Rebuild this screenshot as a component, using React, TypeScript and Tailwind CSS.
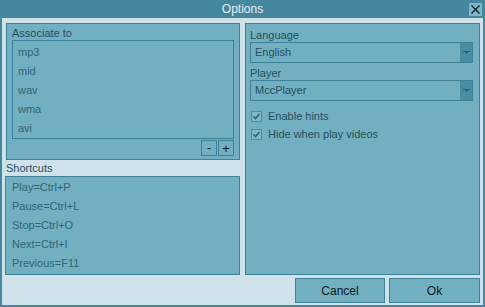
import React from "react";

const font = { fontFamily: '"Liberation Sans", Arial, sans-serif' };

function Combo({ value }: { value: string }) {
  return (
    <div className="flex h-[21px] w-[223px] border border-[#3e8299] bg-[#72afc1]">
      <div className="flex-1 pl-[4px] leading-[19px] text-[#24505e]">{value}</div>
      <div className="flex w-[12px] items-center justify-center bg-[#4a8ca1]">
        <svg width="7" height="4" viewBox="0 0 7 4">
          <rect x="0" y="0" width="7" height="1" fill="#2c5f6f" />
          <rect x="2" y="1" width="3" height="1" fill="#2c5f6f" />
          <rect x="3" y="2" width="1" height="1" fill="#2c5f6f" />
        </svg>
      </div>
    </div>
  );
}

function Check({ label }: { label: string }) {
  return (
    <div className="flex h-[18px] items-center pl-[1px]">
      <div className="flex h-[11px] w-[11px] items-center justify-center border border-[#4b8ea3] bg-[#7fb8c9]">
        <svg width="9" height="9" viewBox="0 0 9 9">
          <path d="M1.5 4.5 L3.5 6.5 L7.5 2" stroke="#2c6173" strokeWidth="1.6" fill="none" />
        </svg>
      </div>
      <span className="pl-[6px] text-[#24505e]">{label}</span>
    </div>
  );
}

export default function App() {
  const assoc = ["mp3", "mid", "wav", "wma", "avi"];
  const shortcuts = ["Play=Ctrl+P", "Pause=Ctrl+L", "Stop=Ctrl+O", "Next=Ctrl+I", "Previous=F11"];
  return (
    <div style={font} className="flex h-[307px] w-[485px] flex-col bg-[#45879d] text-[11px]">
      <div className="relative flex h-[18px] items-center justify-center text-[12px] text-[#e4f0f4]">
        Options
        <div className="absolute right-[3px] top-[3px] flex h-[13px] w-[13px] items-center justify-center bg-[#7db6c8]">
          <svg width="9" height="9" viewBox="0 0 9 9">
            <path d="M0.5 0.5 L8.5 8.5 M8.5 0.5 L0.5 8.5" stroke="#0d1a1f" strokeWidth="1.2" />
          </svg>
        </div>
      </div>
      <div className="mx-[2px] mb-[2px] flex flex-1 flex-col bg-[#d0e2e9] pl-[4px] pr-[3px] pt-[5px]">
        <div className="flex h-[252px] gap-[5px]">
          <div className="flex w-[234px] flex-col">
            <div className="flex h-[137px] flex-col border border-[#3e8299] bg-[#72afc1] pl-[5px] pr-[5px]">
              <div className="mt-[2px] h-[14px] leading-[14px] text-[#24505e]">Associate to</div>
              <div className="h-[99px] border border-[#3e8299] pl-[5px] pt-[2px]">
                {assoc.map((a) => (
                  <div key={a} className="h-[19px] leading-[19px] text-[#2e6676]">
                    {a}
                  </div>
                ))}
              </div>
              <div className="mt-[1px] flex justify-end gap-[1px]">
                <div className="flex h-[16px] w-[16px] items-center justify-center border border-[#3e8299] text-[12px] leading-none text-[#0d1a1f]">
                  -
                </div>
                <div className="flex h-[16px] w-[16px] items-center justify-center border border-[#3e8299] text-[13px] leading-none text-[#0d1a1f]">
                  +
                </div>
              </div>
            </div>
            <div className="h-[16px] leading-[16px] text-[#24505e]">Shortcuts</div>
            <div className="ml-[-1px] h-[99px] border border-[#3e8299] bg-[#72afc1] pl-[6px] pt-[1px]">
              {shortcuts.map((s) => (
                <div key={s} className="h-[19px] leading-[19px] text-[#2e6676]">
                  {s}
                </div>
              ))}
            </div>
          </div>
          <div className="flex w-[235px] flex-col border border-[#3e8299] bg-[#72afc1] pl-[4px] pt-[4px]">
            <div className="h-[14px] leading-[14px] text-[#24505e]">Language</div>
            <Combo value="English" />
            <div className="mt-[3px] h-[14px] leading-[14px] text-[#24505e]">Player</div>
            <Combo value="MccPlayer" />
            <div className="mt-[6px]">
              <Check label="Enable hints" />
              <Check label="Hide when play videos" />
            </div>
          </div>
        </div>
        <div className="mt-[3px] flex justify-end gap-[4px]">
          <div className="flex h-[25px] w-[90px] items-center justify-center border border-[#3e8299] bg-[#72afc1] text-[12px] text-[#0d1a1f]">
            Cancel
          </div>
          <div className="flex h-[25px] w-[91px] items-center justify-center border border-[#3e8299] bg-[#72afc1] text-[12px] text-[#0d1a1f]">
            Ok
          </div>
        </div>
      </div>
    </div>
  );
}
